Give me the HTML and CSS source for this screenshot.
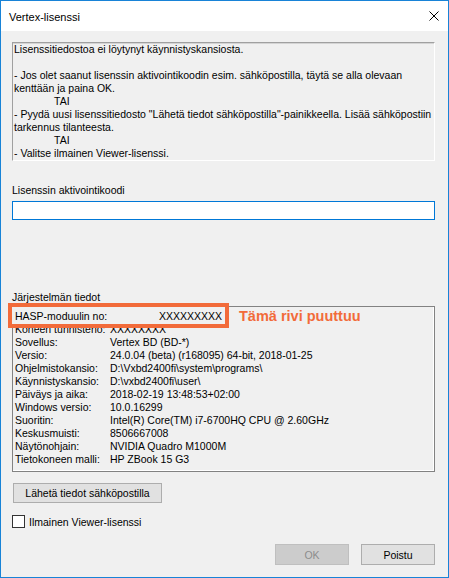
FILE: index.html
```html
<!DOCTYPE html>
<html lang="fi">
<head>
  <meta charset="UTF-8">
  <meta name="viewport" content="width=device-width, initial-scale=1.0">
  <link rel="stylesheet" href="styles.css">
</head>
<body>
  <div class="window">
    <div class="titlebar">
      <span class="title">Vertex-lisenssi</span>
      <svg class="close" width="10" height="10" viewBox="0 0 10 10">
        <path d="M0.5 0.5 L9.5 9.5 M9.5 0.5 L0.5 9.5" stroke="#000" stroke-width="1" fill="none"/>
      </svg>
    </div>

    <div class="content">
      <div class="message">
        <div>Lisenssitiedostoa ei löytynyt käynnistyskansiosta.</div>
        <div>&nbsp;</div>
        <div>- Jos olet saanut lisenssin aktivointikoodin esim. sähköpostilla, täytä se alla olevaan</div>
        <div>kenttään ja paina OK.</div>
        <div class="tab">TAI</div>
        <div>- Pyydä uusi lisenssitiedosto "Lähetä tiedot sähköpostilla"-painikkeella. Lisää sähköpostiin</div>
        <div>tarkennus tilanteesta.</div>
        <div class="tab">TAI</div>
        <div>- Valitse ilmainen Viewer-lisenssi.</div>
      </div>

      <label class="field-label" for="code">Lisenssin aktivointikoodi</label>
      <input class="code-input" type="text" id="code">

      <div class="field-label info-label">Järjestelmän tiedot</div>
      <div class="info">
        <div class="row"><span>Koneen tunnisteno:</span><span>XXXXXXXX</span></div>
        <div class="row"><span>Sovellus:</span><span>Vertex BD (BD-*)</span></div>
        <div class="row"><span>Versio:</span><span>24.0.04 (beta) (r168095) 64-bit, 2018-01-25</span></div>
        <div class="row"><span>Ohjelmistokansio:</span><span>D:\Vxbd2400fi\system\programs\</span></div>
        <div class="row"><span>Käynnistyskansio:</span><span>D:\vxbd2400fi\user\</span></div>
        <div class="row"><span>Päiväys ja aika:</span><span>2018-02-19 13:48:53+02:00</span></div>
        <div class="row"><span>Windows versio:</span><span>10.0.16299</span></div>
        <div class="row"><span>Suoritin:</span><span>Intel(R) Core(TM) i7-6700HQ CPU @ 2.60GHz</span></div>
        <div class="row"><span>Keskusmuisti:</span><span>8506667008</span></div>
        <div class="row"><span>Näytönohjain:</span><span>NVIDIA Quadro M1000M</span></div>
        <div class="row"><span>Tietokoneen malli:</span><span>HP ZBook 15 G3</span></div>

        <!-- annotation pasted over the first row -->
        <div class="callout">
          <span>HASP-moduulin no:</span>
          <span>XXXXXXXXX</span>
        </div>
        <div class="callout-note">Tämä rivi puuttuu</div>
      </div>

      <button class="btn send-btn" type="button">Lähetä tiedot sähköpostilla</button>

      <label class="check">
        <span class="box"></span>
        <span>Ilmainen Viewer-lisenssi</span>
      </label>

      <div class="actions">
        <button class="btn btn-disabled" type="button" disabled>OK</button>
        <button class="btn" type="button">Poistu</button>
      </div>
    </div>
  </div>
</body>
</html>
```

FILE: styles.css
```css
body {
  margin: 0;
  background-color: #f0f0f0;
  font-family: "Liberation Sans", Arial, sans-serif;
  font-size: 10.5px;
  color: #000;
}
.window {
  width: 449px;
  height: 578px;
  box-sizing: border-box;
  border: 1px solid #1883d7;
  display: flex;
  flex-direction: column;
  background-color: #f0f0f0;
}
.titlebar {
  height: 30px;
  flex: none;
  background-color: white;
  display: flex;
  align-items: center;
  justify-content: space-between;
  padding: 0 9px 0 8px;
}
.title {
  font-size: 11px;
  margin-top: 1px;
}
.close {
  display: block;
  margin-top: -1px;
}
.content {
  flex: 1;
  display: flex;
  flex-direction: column;
  padding: 11px 13px 12px 11px;
}
.message {
  height: 119px;
  box-sizing: border-box;
  border: 1px solid;
  border-color: #a0a0a0 #fff #fff #a0a0a0;
  box-shadow: inset 0 1px 0 #d4d4d4;
  padding-left: 1px;
  line-height: 13px;
  white-space: nowrap;
  overflow: hidden;
}
.tab {
  padding-left: 40px;
}
.field-label {
  display: block;
  line-height: 13px;
  margin-top: 23px;
}
.code-input {
  display: block;
  margin: 4px 0 0;
  height: 19px;
  box-sizing: border-box;
  border: 1px solid #0078d7;
  background: white;
  padding: 0 2px;
  font: inherit;
  outline: none;
}
.info-label {
  margin-top: 71px;
}
.info {
  position: relative;
  margin-top: 2px;
  height: 166px;
  box-sizing: border-box;
  border: 1px solid #828282;
  box-shadow: inset -1px -1px 0 #fff;
  padding: 16px 2px 0 2px;
  line-height: 13px;
}
.row {
  display: grid;
  grid-template-columns: 95px 1fr;
  white-space: nowrap;
}
.callout {
  position: absolute;
  left: -5px;
  top: -4px;
  width: 221px;
  height: 25px;
  box-sizing: border-box;
  border: 4px solid #f26b3a;
  background-color: #f0f0f0;
  display: flex;
  justify-content: space-between;
  padding: 3px 3px 0 3px;
  line-height: 13px;
}
.callout-note {
  position: absolute;
  left: 226px;
  top: 1px;
  font-size: 14.5px;
  font-weight: bold;
  line-height: 16px;
  color: #f26b3a;
  white-space: nowrap;
}
.btn {
  font: inherit;
  color: #000;
  background-color: #e1e1e1;
  border: 1px solid #adadad;
  padding: 0;
  height: 21px;
  width: 74px;
}
.send-btn {
  align-self: flex-start;
  margin: 11px 0 0 1px;
  width: 149px;
  height: 20px;
}
.check {
  display: flex;
  align-items: center;
  gap: 4px;
  margin-top: 12px;
  height: 13px;
}
.box {
  width: 13px;
  height: 13px;
  box-sizing: border-box;
  border: 1px solid #333;
  background: white;
}
.actions {
  margin-top: auto;
  display: flex;
  justify-content: flex-end;
  gap: 12px;
}
.btn-disabled {
  background-color: #cccccc;
  border-color: #bfbfbf;
  color: #8d8d8d;
}
```
